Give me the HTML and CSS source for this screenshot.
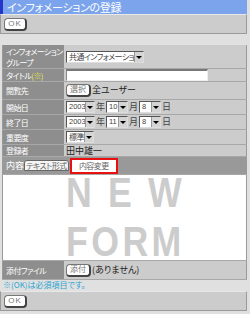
FILE: index.html
```html
<!DOCTYPE html>
<html lang="ja">
<head>
  <meta charset="UTF-8">
  <title>インフォメーションの登録</title>
  <link rel="stylesheet" href="styles.css">
</head>
<body>
  <div class="title-bar">インフォメーションの登録</div>
  <div class="toolbar"><span class="btn">OK</span></div>

  <table class="form">
    <tr class="row-group">
      <th>インフォメーション<br>グループ</th>
      <td><span class="select w-group">共通インフォメーション<i></i></span></td>
    </tr>
    <tr class="row-title">
      <th>タイトル<em>(※)</em></th>
      <td><span class="input"></span></td>
    </tr>
    <tr class="row-view">
      <th>閲覧先</th>
      <td><span class="btn">選択</span>全ユーザー</td>
    </tr>
    <tr class="row-date">
      <th>開始日</th>
      <td>
        <span class="select w-year">2003<i></i></span><span class="unit">年</span><span class="select w-mon">10<i></i></span><span class="unit">月</span><span class="select w-day">8<i></i></span><span class="unit">日</span>
      </td>
    </tr>
    <tr class="row-date">
      <th>終了日</th>
      <td>
        <span class="select w-year">2003<i></i></span><span class="unit">年</span><span class="select w-mon">11<i></i></span><span class="unit">月</span><span class="select w-day">8<i></i></span><span class="unit">日</span>
      </td>
    </tr>
    <tr class="row-prio">
      <th>重要度</th>
      <td><span class="select w-prio">標準<i></i></span></td>
    </tr>
    <tr class="row-user">
      <th>登録者</th>
      <td>田中雄一</td>
    </tr>
    <tr class="row-head">
      <td colspan="2">
        <span class="head-label">内容</span><span class="tab">テキスト形式</span><span class="tab tab-on">内容変更</span>
      </td>
    </tr>
    <tr class="row-body">
      <td colspan="2">
        <div class="canvas">
          <span class="big big-new">NEW</span>
          <span class="big big-form">FORM</span>
        </div>
      </td>
    </tr>
    <tr class="row-file">
      <th>添付ファイル</th>
      <td><span class="btn">添付</span>(ありません)</td>
    </tr>
  </table>

  <p class="note">※(OK)は必須項目です。</p>
  <div class="toolbar"><span class="btn">OK</span></div>
</body>
</html>
```

FILE: styles.css
```css
body {
  margin: 0;
  background: #e0e0e0;
  font-family: "Noto Sans CJK JP", sans-serif;
  font-size: 9px;
  color: #222;
  font-feature-settings: "palt";
}
.title-bar {
  height: 14px;
  margin-right: 3px;
  padding-left: 4px;
  background: #7ba4ec;
  border-left: 3px solid #2535c8;
  color: #fff;
  font-size: 11px;
  line-height: 14px;
  letter-spacing: -0.3px;
}
.toolbar {
  height: 16px;
  margin-right: 3px;
  padding: 2px 3px 0;
  background: #cccccc;
  border: 1px solid #9a9a9a;
  border-top-color: #e8e8e8;
}
.btn {
  display: inline-block;
  height: 10px;
  padding: 0 3px;
  background: #fff;
  border: 1px solid #777;
  border-right: 2px solid #444;
  border-bottom: 2px solid #444;
  border-radius: 4px;
  color: #777;
  font-family: "Liberation Sans", "Noto Sans CJK JP", sans-serif;
  font-size: 8px;
  line-height: 10px;
  vertical-align: middle;
}
.toolbar .btn {
  width: 14px;
  text-align: center;
  letter-spacing: 1px;
}
.form {
  width: 245px;
  margin: 10px 0 0 2px;
  table-layout: fixed;
  border-collapse: collapse;
  border: 1px solid #9a9a9a;
}
.form th,
.form td {
  padding: 0 0 0 2px;
  border-bottom: 1px solid #a8a8a8;
  border-top: 1px solid #e2e2e2;
  line-height: 10px;
  white-space: nowrap;
  overflow: hidden;
}
.form th {
  width: 58px;
  padding-left: 3px;
  background: #8e8e8e;
  color: #fff;
  font-size: 8px;
  font-weight: normal;
  text-align: left;
  line-height: 11px;
  letter-spacing: -0.6px;
}
.form td {
  background: #cccccc;
}
.form th em {
  color: #e8e84a;
  font-style: normal;
}
.row-group { height: 24px; }
.row-title { height: 13px; }
.row-view { height: 18px; }
.row-date { height: 15px; }
.row-prio { height: 15px; }
.row-user { height: 12px; }
.row-head { height: 18px; }
.row-file { height: 19px; }

.select {
  display: inline-block;
  position: relative;
  height: 10px;
  padding-left: 2px;
  background: #fff;
  border: 1px solid #555;
  border-right-color: #ddd;
  border-bottom-color: #ddd;
  color: #444;
  font-size: 8px;
  line-height: 10px;
  letter-spacing: -0.6px;
  vertical-align: middle;
  overflow: hidden;
}
.select i {
  position: absolute;
  top: 0;
  right: 0;
  width: 8px;
  height: 10px;
  background: #d4d4d4;
  border-left: 1px solid #999;
}
.select i::after {
  content: "";
  position: absolute;
  left: 1px;
  top: 4px;
  border-left: 3px solid transparent;
  border-right: 3px solid transparent;
  border-top: 3px solid #000;
}
.w-group { width: 74px; }
.w-year,
.w-mon,
.w-day {
  font-family: "Liberation Sans", sans-serif;
  font-size: 7.5px;
  letter-spacing: 0;
}
.w-year { width: 25px; }
.w-mon { width: 18px; }
.w-day { width: 18px; }
.w-prio { width: 24px; }
.unit {
  display: inline-block;
  width: 11px;
  text-align: center;
  color: #444;
  vertical-align: middle;
}
.input {
  display: inline-block;
  width: 140px;
  height: 9px;
  background: #fff;
  border: 1px solid #eee;
  border-top: 2px solid #777;
  border-left: 1px solid #888;
  vertical-align: middle;
}
.row-view .btn,
.row-file .btn {
  margin-right: 1px;
}

.row-head td {
  background: #999999;
  padding-left: 3px;
  vertical-align: bottom;
}
.head-label {
  display: inline-block;
  width: 18px;
  color: #fff;
  line-height: 10px;
}
.tab {
  display: inline-block;
  height: 9px;
  padding: 0 1px;
  margin-right: 1px;
  background: #f4f4f4;
  border: 1px solid #666;
  border-radius: 3px 3px 0 0;
  color: #666;
  font-size: 8px;
  line-height: 9px;
  letter-spacing: -0.5px;
}
.tab-on {
  width: 42px;
  height: 12px;
  background: #fff;
  border: 2px solid #e81010;
  border-radius: 0;
  text-align: center;
  line-height: 12px;
}
.row-body td {
  height: 85px;
  padding: 0;
  background: #fff;
  line-height: normal;
}
.canvas {
  height: 85px;
  padding-left: 63px;
  overflow: hidden;
}
.big {
  display: block;
  height: 36px;
  transform: scaleX(0.85);
  transform-origin: left;
  color: #cccccc;
  font-family: "Liberation Sans", sans-serif;
  font-size: 42px;
  font-weight: bold;
  line-height: 36px;
  letter-spacing: 4px;
}
.big-new {
  letter-spacing: 19px;
}
.big-form {
  margin-top: 13px;
}
.note {
  margin: 0 0 1px 3px;
  color: #2aa5d0;
  font-size: 8px;
  line-height: 10px;
}
```
